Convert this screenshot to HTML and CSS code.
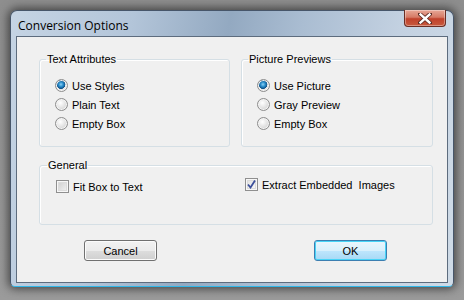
FILE: index.html
```
<!DOCTYPE html>
<html>
<head>
    <link rel="stylesheet" href="styles.css">
</head>
<body>
    <div class="window">
        <div class="titlebar">
            <span class="title">Conversion Options</span>
            <button class="close-btn" type="button" aria-label="Close">
                <svg width="14" height="11" viewBox="0 0 14 11">
                    <path d="M2 1 L12 10 M12 1 L2 10" stroke="#5a2a22" stroke-width="4" stroke-linecap="square"/>
                    <path d="M2.5 1.5 L11.5 9.5 M11.5 1.5 L2.5 9.5" stroke="#ffffff" stroke-width="2.4" stroke-linecap="square"/>
                </svg>
            </button>
        </div>

        <div class="client">
            <div class="groups">
                <fieldset class="group">
                    <legend>Text Attributes</legend>
                    <label class="option"><span class="radio checked"></span>Use Styles</label>
                    <label class="option"><span class="radio"></span>Plain Text</label>
                    <label class="option"><span class="radio"></span>Empty Box</label>
                </fieldset>

                <fieldset class="group">
                    <legend>Picture Previews</legend>
                    <label class="option"><span class="radio checked"></span>Use Picture</label>
                    <label class="option"><span class="radio"></span>Gray Preview</label>
                    <label class="option"><span class="radio"></span>Empty Box</label>
                </fieldset>

                <fieldset class="group general">
                    <legend>General</legend>
                    <div class="general-row">
                        <label class="option fit"><span class="check"></span>Fit Box to Text</label>
                        <label class="option extract"><span class="check checked">
                            <svg width="9" height="9" viewBox="0 0 9 9">
                                <path d="M1 4.5 L3.5 7.5 L8 0.5" fill="none" stroke="#3b4f9a" stroke-width="1.8"/>
                            </svg>
                        </span>Extract Embedded&nbsp; Images</label>
                    </div>
                </fieldset>
            </div>

            <div class="buttons">
                <button class="btn" type="button">Cancel</button>
                <button class="btn default" type="button">OK</button>
            </div>
        </div>
    </div>
</body>
</html>
```

FILE: styles.css
```
body {
    margin: 0;
    height: 300px;
    background: linear-gradient(to bottom, #8e8e8e, #9b9b9b);
    font-family: 'Liberation Sans', Arial, sans-serif;
    font-size: 11px;
    color: #000;
    overflow: hidden;
}

.window {
    margin: 10px 0 0 10px;
    width: 444px;
    height: 277px;
    box-sizing: border-box;
    padding: 0 5px 3px 5px;
    border: 1px solid #47566a;
    border-bottom-color: #2fb7e8;
    border-radius: 7px 7px 5px 5px;
    background: linear-gradient(100deg, #c5d4e4 0%, #b3c5d9 25%, #93a9c1 45%, #aabdd2 60%, #c3d1e1 80%, #cfdbe7 100%);
    box-shadow: 0 0 10px 2px rgba(0, 0, 0, 0.55);
    display: flex;
    flex-direction: column;
}

.titlebar {
    height: 25px;
    display: flex;
    align-items: flex-start;
    justify-content: space-between;
}

.title {
    font-family: 'Open Sans', 'Liberation Sans', sans-serif;
    font-size: 12px;
    margin: 6px 0 0 2px;
    color: #000;
}

.close-btn {
    width: 42px;
    height: 17px;
    margin: -1px 2px 0 0;
    padding: 0;
    border: 1px solid #6a2d24;
    border-top: none;
    border-radius: 0 0 4px 4px;
    background: linear-gradient(to bottom, #e8a897 0%, #d67a66 45%, #c0412b 55%, #c85a3e 100%);
    box-shadow: inset 0 0 0 1px rgba(255, 255, 255, 0.35);
    display: flex;
    align-items: center;
    justify-content: center;
}

.client {
    flex: 1;
    background: #f0f0f0;
    border: 1px solid #5d6c7e;
    padding: 16px 16px 0 22px;
}

.groups {
    display: grid;
    grid-template-columns: 191px 192px;
    column-gap: 11px;
    row-gap: 12px;
}

.group {
    margin: 0;
    padding: 10px 0 0 15px;
    border: 1px solid #d5dfe5;
    border-radius: 3px;
    box-shadow: inset 1px 1px 0 #ffffff;
    height: 94px;
    box-sizing: border-box;
    display: flex;
    flex-direction: column;
    min-width: 0;
}

.group legend {
    padding: 0 1px;
    margin-left: -9px;
    line-height: 13px;
}

.group.general {
    grid-column: 1 / 3;
    height: 66px;
    padding: 0 0 0 16px;
}

.general-row {
    display: flex;
    padding-top: 3px;
}

.option {
    display: flex;
    align-items: center;
    height: 19px;
    white-space: nowrap;
}

.option.fit {
    width: 189px;
    padding-top: 2px;
}

.radio {
    width: 13px;
    height: 13px;
    box-sizing: border-box;
    margin-right: 4px;
    border-radius: 50%;
    border: 1px solid #8d8d8d;
    background: radial-gradient(circle at 40% 35%, #ffffff 0%, #e6e6e6 45%, #c4c4c4 100%);
    box-shadow: inset 0 0 0 1px #f4f4f4;
}

.radio.checked {
    background: radial-gradient(circle at 45% 40%, #8fd0f3 0%, #2a8fcd 25%, #0f4f86 48%, #e6e6e6 52%, #d0d0d0 100%);
}

.check {
    width: 13px;
    height: 13px;
    box-sizing: border-box;
    margin-right: 4px;
    border: 1px solid #8f8f8f;
    background: linear-gradient(135deg, #cbcbcb, #f6f6f6);
    box-shadow: inset 0 0 0 1px #f7f7f7, inset 0 0 0 2px #dcdcdc;
    display: flex;
    align-items: center;
    justify-content: center;
}

.check.checked {
    background: linear-gradient(135deg, #dedede, #fbfbfb);
}

.buttons {
    display: flex;
    padding: 15px 0 0 45px;
    gap: 157px;
}

.btn {
    width: 73px;
    height: 21px;
    font-family: 'Liberation Sans', Arial, sans-serif;
    font-size: 11px;
    color: #000;
    border: 1px solid #707070;
    border-radius: 3px;
    background: linear-gradient(to bottom, #f2f2f2 0%, #ebebeb 50%, #dddddd 51%, #cfcfcf 100%);
    box-shadow: inset 0 0 0 1px #fbfbfb;
    padding: 0;
}

.btn.default {
    border-color: #3c7fb1;
    background: linear-gradient(to bottom, #eaf6fd 0%, #d9f0fc 50%, #bee6fd 51%, #a7d9f5 100%);
    box-shadow: inset 0 0 0 1px #48d4f7;
}
```
